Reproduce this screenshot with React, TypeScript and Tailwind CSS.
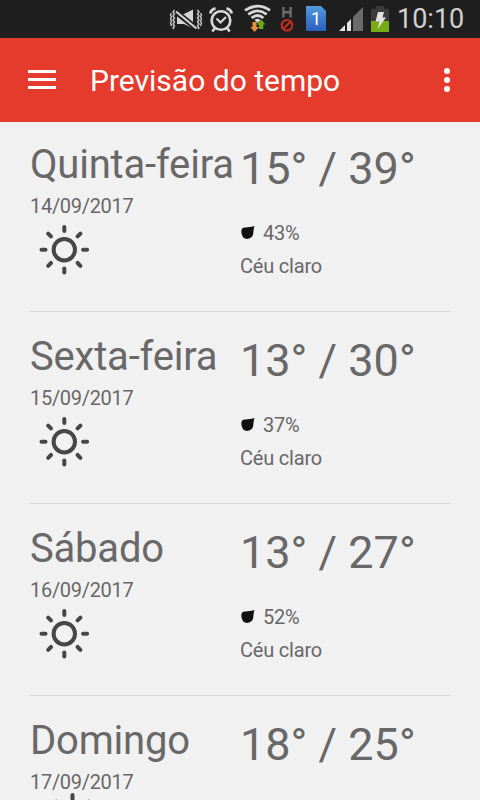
type Forecast = {
    day: string;
    date: string;
    min: number;
    max: number;
    humidity?: number;
    sky?: string;
    icon: "sun" | "cloudSun";
};

const forecasts: Forecast[] = [
    { day: "Quinta-feira", date: "14/09/2017", min: 15, max: 39, humidity: 43, sky: "Céu claro", icon: "sun" },
    { day: "Sexta-feira", date: "15/09/2017", min: 13, max: 30, humidity: 37, sky: "Céu claro", icon: "sun" },
    { day: "Sábado", date: "16/09/2017", min: 13, max: 27, humidity: 52, sky: "Céu claro", icon: "sun" },
    { day: "Domingo", date: "17/09/2017", min: 18, max: 25, icon: "cloudSun" },
];

const SunIcon = () => (
    <svg width="52" height="52" viewBox="-26.3 -25.7 52 52" fill="none" stroke="#464646" strokeWidth="4" strokeLinecap="round">
        <circle r="10.7" />
        {[0, 45, 90, 135, 180, 225, 270, 315].map((angle) => (
            <path key={angle} d="M0 -18.8V-22.8" transform={`rotate(${angle})`} />
        ))}
    </svg>
);

const CloudSunIcon = () => (
    <svg width="68" height="60" viewBox="-34.5 -26 68 60" fill="none" stroke="#464646" strokeWidth="4" strokeLinecap="round">
        <path d="M-10 4A10.7 10.7 0 1 1 9 6" />
        {[-90, -45, 0, 45, 90].map((angle) => (
            <path key={angle} d="M0 -19V-23" transform={`rotate(${angle})`} />
        ))}
        <path d="M-20 28H18A8 8 0 0 0 18 12A14 14 0 0 0 -10 12A8 8 0 0 0 -20 28Z" />
    </svg>
);

const DropIcon = () => (
    <svg width="15" height="16" viewBox="0 0 15 16" className="blur-[0.6px]">
        <path d="M2.5 3.2C5 2 10 2.6 14.6 1C13.4 3.6 13.6 7 13 9.8C12.2 12.6 9.5 14 6.8 13.9C4.3 13.8 2.5 12.2 1.8 9.5C1.3 7.5 1 4.4 2.5 3.2Z" fill="#111" />
    </svg>
);

const StatusBar = () => (
    <div className="relative h-[38px] bg-[#1f1f1f]">
        <svg width="480" height="38" viewBox="0 0 480 38" className="block">
            {/* vibrate / muted */}
            <path d="M177 14H184L193 9.5V28.5L184 24H177Z" fill="#d4d4d4" />
            <path d="M176 12L196 28" stroke="#1f1f1f" strokeWidth="5.5" />
            <path d="M176 11.5L196.5 28.5" stroke="#d4d4d4" strokeWidth="2.2" />
            <path d="M174.5 10l-1.5 2 1.5 2-1.5 2 1.5 2-1.5 2 1.5 2-1.5 2 1.5 2-1.5 2 1 1M171.5 13l-1 2 1 2-1 2 1 2-1 2 1 3M197.5 10l1.5 2-1.5 2 1.5 2-1.5 2 1.5 2-1.5 2 1.5 2-1.5 2 1.5 2-1 1M200.5 13l1 2-1 2 1 2-1 2 1 2-1 3" fill="none" stroke="#c8c8c8" strokeWidth="1.4" />
            {/* alarm */}
            <g fill="none" stroke="#d8d8d8" strokeWidth="2.6">
                <circle cx="221" cy="20.5" r="9.3" />
                <path d="M216.5 18.5L220.5 22.5L226 17" strokeWidth="2.2" />
                <path d="M210.3 13.5Q211 9.5 215.5 8.3M226.5 8.3Q231 9.5 231.7 13.5" strokeWidth="2.8" />
                <path d="M215 28L212.3 31.5M227 28L229.7 31.5" />
            </g>
            {/* wifi */}
            <g fill="none" stroke="#d8d8d8" strokeWidth="2.8">
                <path d="M245 10.4Q257.5 2 270 10.4" />
                <path d="M248.3 14.3Q257.5 7.5 266.7 14.3" />
                <path d="M251.6 18Q257.5 13 263.4 18" />
                <path d="M254.5 20Q257.5 17.5 260.5 20L257.5 23Z" fill="#d8d8d8" stroke="none" />
            </g>
            <path d="M252.5 22H256.5V27H259L254.5 32L250.5 27H252.5Z" fill="#e8913a" />
            <path d="M261.2 19.5L265.5 24.5H263.3V29H259V24.5H256.8Z" fill="#6ca717" />
            {/* no data */}
            <path d="M283.4 7V17.5M290.6 7V17.5M283.4 12.3H290.6" stroke="#6c6c6c" strokeWidth="2.4" />
            <g fill="none" stroke="#c92c20" strokeWidth="2">
                <circle cx="287" cy="25.2" r="5.3" />
                <path d="M283.2 28.8L290.8 21.6" />
            </g>
            {/* sim card */}
            <defs>
                <linearGradient id="sim" x1="0" y1="0" x2="0" y2="1">
                    <stop offset="0" stopColor="#5299dc" />
                    <stop offset="1" stopColor="#2b5fc0" />
                </linearGradient>
            </defs>
            <path d="M306 6H321L326 11V31H306Z" fill="url(#sim)" />
            {/* signal */}
            <path d="M353 17V31H363V7Z" fill="#6b6b6b" />
            <path d="M339 31L345 25V31Z M347 31V23L351 19V31Z" fill="#e4e4e4" />
            {/* battery */}
            <path d="M376 6H384V9H389V21H371V9H376Z" fill="#3b3b3b" />
            <path d="M371 21H389V32H371Z" fill="#78aa16" />
            <path d="M378 12H384L382.5 17.5H386L377.5 29L379.5 21.5H375.5Z" fill="#e2e2e2" />
        </svg>
        <span className="absolute left-[306px] top-[9px] w-5 text-center text-lg leading-5 text-white">1</span>
        <span className="absolute left-[397px] top-[4px] text-[27px] leading-[30px] text-[#d0d0d0]">10:10</span>
    </div>
);

const Header = () => (
    <header className="flex h-[84px] items-center bg-[#e43b2c] pl-7 pr-[30px] text-white">
        <div className="flex w-7 flex-col gap-[5px] pb-px">
            <span className="h-[3px] bg-white" />
            <span className="h-[3px] bg-white" />
            <span className="h-[3px] bg-white" />
        </div>
        <h1 className="ml-[34px] flex-1 whitespace-nowrap pt-0.5 text-[30px] leading-9">Previsão do tempo</h1>
        <div className="flex flex-col gap-[3px]">
            <span className="size-1.5 rounded-full bg-white" />
            <span className="size-1.5 rounded-full bg-white" />
            <span className="size-1.5 rounded-full bg-white" />
        </div>
    </header>
);

const ForecastRow = ({ item }: { item: Forecast }) => (
    <li className="flex h-48 shrink-0 border-b border-[#d9d9d9] text-xl leading-6 text-[#686868]">
        <div className="w-[210px] shrink-0 whitespace-nowrap pt-[21px]">
            <h2 className="text-[40px] leading-12 tracking-[-0.2px]">{item.day}</h2>
            <p className="mt-[5px] tracking-[-0.3px]">{item.date}</p>
            {item.icon === "sun" ? (
                <div className="ml-2 mt-1.5"><SunIcon /></div>
            ) : (
                <div className="ml-2 -mt-0.5"><CloudSunIcon /></div>
            )}
        </div>
        <div className="whitespace-nowrap pt-[22px]">
            <p className="text-[45px] leading-[54px]">{item.min}° / {item.max}°</p>
            {item.humidity && (
                <p className="mt-[25px] flex items-center gap-2 tracking-[-0.2px]">
                    <DropIcon />
                    {item.humidity}%
                </p>
            )}
            {item.sky && <p className="mt-[9px] tracking-[-0.2px]">{item.sky}</p>}
        </div>
    </li>
);

const App = () => {
    return (
        <div className="flex h-[800px] w-[480px] flex-col overflow-hidden bg-[#f1f1f1] font-['Roboto',sans-serif]">
            <StatusBar />
            <Header />
            <ul className="-mt-0.5 min-h-0 flex-1 overflow-hidden px-[30px]">
                {forecasts.map((item) => (
                    <ForecastRow key={item.date} item={item} />
                ))}
            </ul>
        </div>
    );
};

export default App;
